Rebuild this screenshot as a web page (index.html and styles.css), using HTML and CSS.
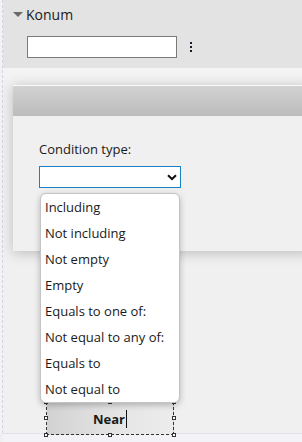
FILE: index.html
```html
<!DOCTYPE html>
<html>
<head>
<meta charset="utf-8">
<link rel="stylesheet" href="styles.css">
</head>
<body>
<div class="page">
  <div class="edge"></div>
  <div class="main">
    <div class="section">
      <div class="section-head"><span class="tri"></span><span class="title">Konum</span></div>
      <div class="section-row">
        <div class="text-input"></div>
        <div class="kebab"><i></i><i></i><i></i></div>
      </div>
    </div>
    <div class="canvas"></div>
    <div class="footer"></div>
  </div>
</div>

<div class="dialog">
  <div class="dialog-head"></div>
  <div class="dialog-body">
    <div class="label">Condition type:</div>
    <div class="select">
      <svg class="chev" width="10" height="7" viewBox="0 0 10 7"><path d="M1 1.2 L5 5 L9 1.2" fill="none" stroke="#111" stroke-width="2"/></svg>
    </div>
  </div>
</div>

<div class="near">
  <span class="near-text">Near</span><span class="caret"></span>
  <i class="h tl"></i><i class="h tc"></i><i class="h tr"></i>
  <i class="h ml"></i><i class="h mr"></i>
  <i class="h bl"></i><i class="h bc"></i><i class="h br"></i>
</div>

<ul class="options">
  <li>Including</li>
  <li>Not including</li>
  <li>Not empty</li>
  <li>Empty</li>
  <li>Equals to one of:</li>
  <li>Not equal to any of:</li>
  <li>Equals to</li>
  <li>Not equal to</li>
</ul>
</body>
</html>
```
FILE: styles.css
```css
html, body {
  margin: 0;
  padding: 0;
}
body {
  width: 302px;
  height: 442px;
  overflow: hidden;
  position: relative;
  background: #f0f0f0;
  font-family: "Open Sans", "Noto Sans", sans-serif;
  font-size: 13px;
  color: #1a1a1a;
}
.page {
  display: flex;
  height: 442px;
}
.edge {
  width: 2px;
  flex: none;
  border-right: 1px dashed #d4d4dc;
  background: #f3f3f5;
  height: 433px;
}
.main {
  flex: 1;
  display: flex;
  flex-direction: column;
}
.section {
  height: 68px;
  background: #e3e3e3;
  box-sizing: border-box;
  padding-top: 3px;
}
.section-head {
  display: flex;
  align-items: center;
  height: 22px;
  padding-left: 10px;
}
.tri {
  width: 0;
  height: 0;
  border-left: 5px solid transparent;
  border-right: 5px solid transparent;
  border-top: 5px solid #6a6a6a;
  margin-right: 3px;
  margin-top: 1px;
}
.title {
  font-size: 14px;
  color: #1a1a1a;
}
.section-row {
  display: flex;
  align-items: center;
  padding-left: 24px;
  margin-top: 11px;
}
.text-input {
  width: 148px;
  height: 20px;
  background: #fff;
  border: 1px solid #7a7a7a;
}
.kebab {
  display: flex;
  flex-direction: column;
  gap: 2px;
  margin-left: 13px;
}
.kebab i {
  display: block;
  width: 2px;
  height: 2px;
  background: #1a1a2a;
}
.canvas {
  flex: 1;
  background: linear-gradient(#f4f4f4, #f0f0f0 20px);
}
.footer {
  height: 8px;
  background: #f2f2f7;
  border-top: 1px solid #e2e2e6;
}
.dialog {
  position: absolute;
  left: 13px;
  top: 85px;
  width: 300px;
  height: 166px;
  background: #f0f0f0;
  box-shadow: 0 2px 12px rgba(0, 0, 0, 0.22);
}
.dialog-head {
  height: 30px;
  border-top: 1px solid #fafafa;
  background: linear-gradient(#d2d2d2, #bcbcbc);
}
.dialog-body {
  padding: 24px 26px;
}
.label {
  font-size: 13px;
  color: #1a1a1a;
  line-height: 18px;
}
.select {
  margin-top: 8px;
  width: 140px;
  height: 20px;
  border: 1px solid #1a7fc4;
  background: #fff;
  position: relative;
}
.chev {
  position: absolute;
  right: 3px;
  top: 7px;
}
.options {
  position: absolute;
  left: 40px;
  top: 193px;
  width: 138px;
  height: 208px;
  margin: 0;
  padding: 0;
  list-style: none;
  background: #fff;
  border: 1px solid #c4c4c4;
  border-radius: 6px;
  box-shadow: 0 2px 6px rgba(0, 0, 0, 0.25);
}
.options li {
  height: 26px;
  line-height: 26px;
  padding-left: 4px;
  font-size: 13px;
  color: #1a1a1a;
}
.near {
  position: absolute;
  left: 46px;
  top: 402px;
  width: 126px;
  height: 31px;
  border: 1px dashed #333;
  background: linear-gradient(90deg, #d2d2d2, #e6e6e6 60%, #ececec);
  display: flex;
  align-items: center;
  justify-content: center;
}
.near-text {
  font-weight: bold;
  font-size: 13px;
  color: #1a1a1a;
}
.caret {
  width: 1px;
  height: 18px;
  background: #111;
  margin-left: 1px;
}
.h {
  position: absolute;
  width: 2px;
  height: 2px;
  border: 1px solid #333;
  background: #fff;
}
.tl { left: -3px; top: -3px; }
.tc { left: 61px; top: -3px; }
.tr { right: -3px; top: -3px; }
.ml { left: -3px; top: 13px; }
.mr { right: -3px; top: 13px; }
.bl { left: -3px; bottom: -3px; }
.bc { left: 61px; bottom: -3px; }
.br { right: -3px; bottom: -3px; }
```
